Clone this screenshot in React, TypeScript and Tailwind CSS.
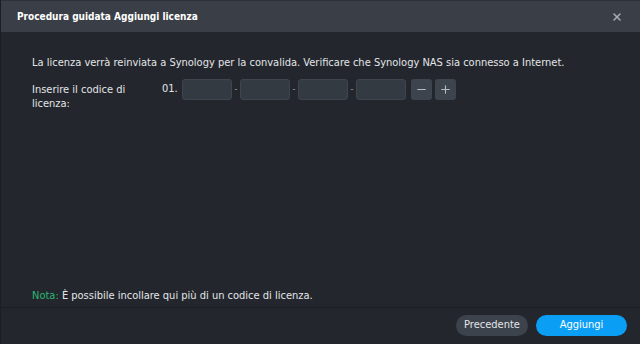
import { X, Minus, Plus } from "lucide-react";

export default function App() {
  const font = { fontFamily: '"DejaVu Sans Condensed", "Liberation Sans", sans-serif' };

  return (
    <div className="w-[640px] h-[344px] flex flex-col bg-[#23272d] text-[#e3e5e8] border-l border-[#1b1e22] overflow-hidden" style={font}>
      {/* Header */}
      <div className="h-[32px] shrink-0 bg-[#3a3f47] flex items-center justify-between pl-[16px] pr-[17px] border-t border-[#2c3037]">
        <span className="text-[10px] font-bold text-white">Procedura guidata Aggiungi licenza</span>
        <X className="w-[12px] h-[12px] text-[#a9adb3]" strokeWidth={3} />
      </div>

      {/* Body */}
      <div className="flex-1 flex flex-col px-[31px] pt-[24px]">
        <p className="text-[11px] leading-[14px]">
          La licenza verrà reinviata a Synology per la convalida. Verificare che Synology NAS sia connesso a Internet.
        </p>

        <div className="flex mt-[9px]">
          <div className="w-[130px] text-[11px] leading-[14px] pt-[4px]">
            Inserire il codice di
            <br />
            licenza:
          </div>
          <div className="flex items-center h-[21px] gap-[2px]">
            <span className="text-[11px] w-[18px]">01.</span>
            {[0, 1, 2, 3].map((i) => (
              <div key={i} className="flex items-center gap-[2px]">
                {i > 0 && <span className="w-[4px] text-center text-[9px] text-[#9aa0a6]">-</span>}
                <div className="w-[50px] h-[21px] rounded-[3px] bg-[#343a42] border border-[#3f454e]" />
              </div>
            ))}
            <div className="ml-[3px] w-[21px] h-[21px] rounded-[3px] bg-[#3e444d] flex items-center justify-center">
              <Minus className="w-[13px] h-[13px] text-[#b8bcc2]" strokeWidth={2} />
            </div>
            <div className="ml-[1px] w-[21px] h-[21px] rounded-[3px] bg-[#3e444d] flex items-center justify-center">
              <Plus className="w-[13px] h-[13px] text-[#b8bcc2]" strokeWidth={2} />
            </div>
          </div>
        </div>

        <div className="flex-1" />

        <p className="text-[11px] leading-[14px] mb-[4px]">
          <span className="text-[#2bb673]">Nota:</span> È possibile incollare qui più di un codice di licenza.
        </p>
      </div>

      {/* Footer */}
      <div className="h-[37px] shrink-0 border-t border-[#1a1d21] flex items-center justify-end gap-[8px] pr-[13px] pb-[2px]">
        <button className="h-[21px] w-[72px] rounded-full bg-[#3d434c] text-[11px] text-[#e3e5e8]">Precedente</button>
        <button className="h-[21px] w-[91px] rounded-full bg-[#0a9ef5] text-[11px] text-white">Aggiungi</button>
      </div>
    </div>
  );
}
